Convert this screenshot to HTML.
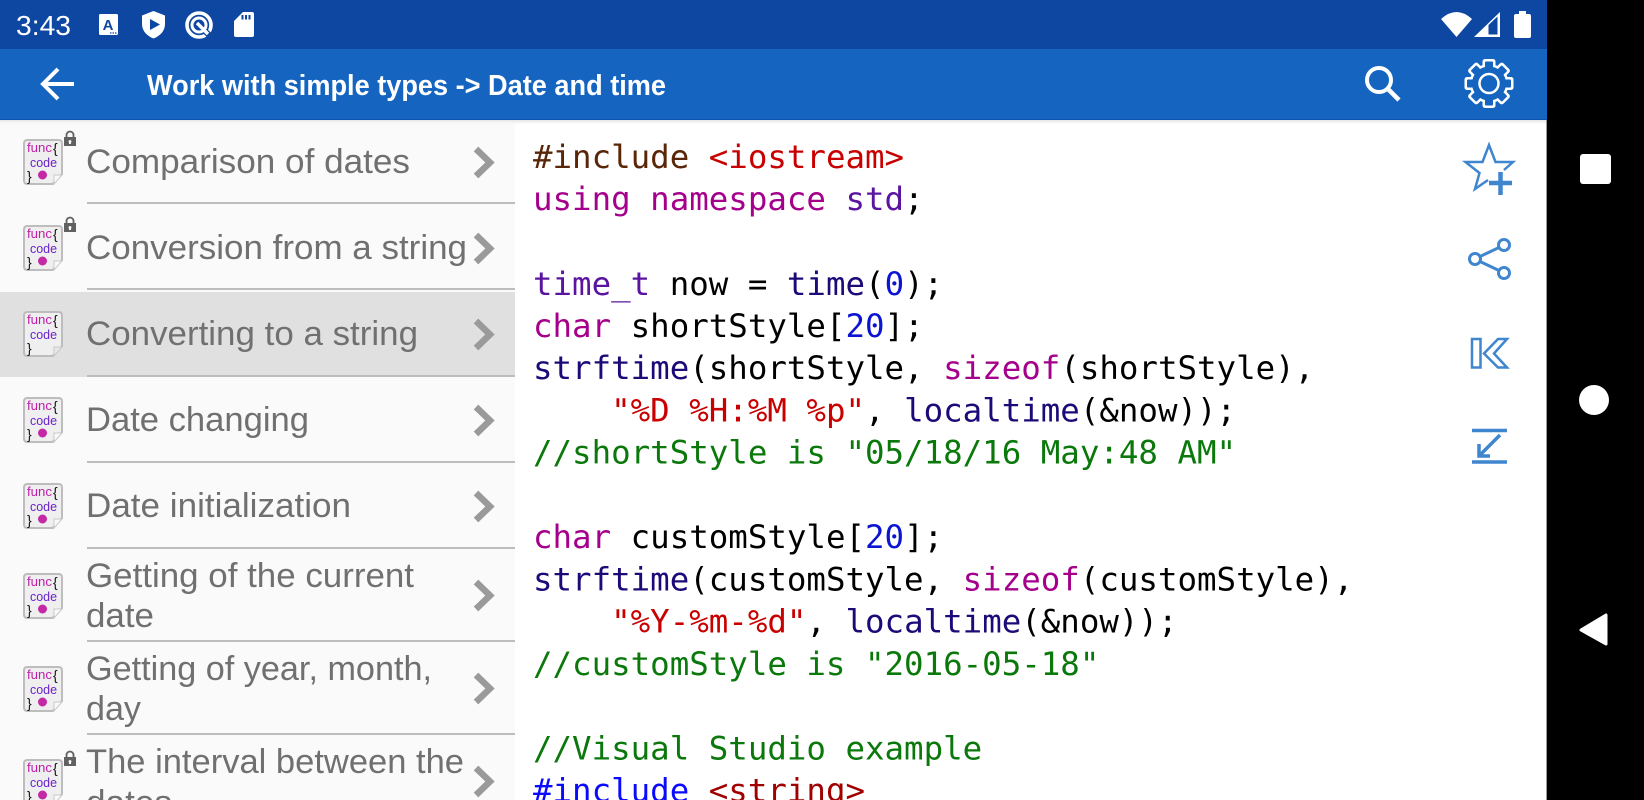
<!DOCTYPE html>
<html><head><meta charset="utf-8"><title>Date and time</title>
<style>
html,body{margin:0;padding:0;width:1644px;height:800px;overflow:hidden;background:#fff}
svg{display:block}
.r{font-family:"Liberation Sans",sans-serif;font-size:34px;fill:#707070}
.c{font-family:"DejaVu Sans Mono","Liberation Mono",monospace;font-size:32.45px;fill:#000;white-space:pre}
.f{font-family:"Liberation Sans",sans-serif;font-size:13px;fill:#c020a8}
.d{font-family:"Liberation Sans",sans-serif;font-size:13px;fill:#6a22c8}
.b{font-family:"Liberation Sans",sans-serif;font-size:14px;fill:#111}
.kw{fill:#a5008c}.ty{fill:#5a14a0}.fn{fill:#1c0a78}.st{fill:#c80000}.cm{fill:#0b780b}.nu{fill:#0a14d2}
</style></head><body>
<svg width="1644" height="800" viewBox="0 0 1644 800" xmlns="http://www.w3.org/2000/svg">
<rect width="1644" height="800" fill="#fff"/>
<!-- list bg -->
<rect x="0" y="120" width="515" height="680" fill="#fafafa"/>
<rect x="0" y="292" width="515" height="85" fill="#e0e0e0"/>
<!-- bars -->
<rect x="0" y="0" width="1547" height="49" fill="#0d47a1"/>
<rect x="0" y="49" width="1547" height="71" fill="#1565c0"/>
<rect x="0" y="119" width="1547" height="1" fill="#0d55ae"/>
<rect x="0" y="120" width="1547" height="1.5" fill="#e8e8e8"/>
<rect x="0" y="121.5" width="1547" height="2" fill="#f6f6f6"/>
<!-- nav -->
<rect x="1546" y="120" width="1" height="680" fill="#9a9a9a"/>
<rect x="1547" y="0" width="97" height="800" fill="#000"/>
<rect x="1580" y="154" width="31" height="30" rx="3" fill="#fff"/>
<circle cx="1594" cy="400" r="15" fill="#fff"/>
<path d="M1606 615 L1606 644 L1581 630 Z" fill="#fff" stroke="#fff" stroke-width="3" stroke-linejoin="round"/>

<!-- status bar -->
<text x="16" y="35" font-family="Liberation Sans,sans-serif" font-size="27.5" fill="#fff" textLength="55" lengthAdjust="spacingAndGlyphs">3:43</text>
<rect x="99" y="14" width="19" height="21" rx="1.5" fill="#fff"/>
<text x="108" y="30" text-anchor="middle" font-family="Liberation Sans,sans-serif" font-size="15" font-weight="bold" fill="#0d47a1">A</text>
<path d="M110 33h1.500M112.500 33h1.500M115 33h1.500" stroke="#0d47a1" stroke-width="1.200"/>
<path d="M153.500 11 L165 15.500 V24 C165 31 160 36 153.500 38.500 C147 36 142 31 142 24 V15.500 Z" fill="#fff"/>
<path d="M150 19 L160 24.500 L150 30 Z" fill="#0d47a1"/>
<circle cx="199" cy="25" r="12" fill="none" stroke="#fff" stroke-width="3.600"/>
<circle cx="199" cy="25" r="7" fill="none" stroke="#fff" stroke-width="3"/>
<path d="M205 31 L213 39" stroke="#0d47a1" stroke-width="6"/>
<path d="M197 23 L208 34" stroke="#fff" stroke-width="3.400"/>
<path d="M243 12 H252 Q254 12 254 14 V35 Q254 37 252 37 H236 Q234 37 234 35 V21 Z" fill="#fff"/>
<path d="M242.500 15v4.500M246 15v4.500M249.500 15v4.500" stroke="#0d47a1" stroke-width="2"/>
<path d="M1441 19 Q1456.500 5 1472 19 L1456.500 37 Z" fill="#fff"/>
<path d="M1474 37 L1500 12 V37 Z" fill="#fff"/>
<path d="M1488.500 25 L1497.500 16.500 V34.500 H1488.500 Z" fill="#0d47a1"/>
<rect x="1514" y="14" width="17" height="24" rx="2" fill="#fff"/>
<rect x="1519" y="11" width="7" height="4" fill="#fff"/>

<!-- app bar -->
<path d="M43 84 H74 M58 69 L43 84 L58 99" fill="none" stroke="#fff" stroke-width="4"/>
<text x="147" y="95" font-family="Liberation Sans,sans-serif" font-size="28.5" font-weight="bold" fill="#fff" textLength="519" lengthAdjust="spacingAndGlyphs">Work with simple types -&gt; Date and time</text>
<circle cx="1379" cy="80" r="12" fill="none" stroke="#fff" stroke-width="4"/>
<path d="M1388 89 L1399 100" stroke="#fff" stroke-width="4.500"/>
<!-- gear -->
<g transform="translate(1489 83.500)">
<circle r="19.500" fill="#fff"/>
<g fill="#fff">
<rect x="-6.500" y="-24.500" width="13" height="13" rx="2.500"/>
<rect x="-6.500" y="-24.500" width="13" height="13" rx="2.500" transform="rotate(45)"/>
<rect x="-6.500" y="-24.500" width="13" height="13" rx="2.500" transform="rotate(90)"/>
<rect x="-6.500" y="-24.500" width="13" height="13" rx="2.500" transform="rotate(135)"/>
<rect x="-6.500" y="-24.500" width="13" height="13" rx="2.500" transform="rotate(180)"/>
<rect x="-6.500" y="-24.500" width="13" height="13" rx="2.500" transform="rotate(225)"/>
<rect x="-6.500" y="-24.500" width="13" height="13" rx="2.500" transform="rotate(270)"/>
<rect x="-6.500" y="-24.500" width="13" height="13" rx="2.500" transform="rotate(315)"/>
</g>
<circle r="17" fill="#1565c0"/>
<g fill="#1565c0">
<rect x="-4" y="-22" width="8" height="12" rx="1"/>
<rect x="-4" y="-22" width="8" height="12" rx="1" transform="rotate(45)"/>
<rect x="-4" y="-22" width="8" height="12" rx="1" transform="rotate(90)"/>
<rect x="-4" y="-22" width="8" height="12" rx="1" transform="rotate(135)"/>
<rect x="-4" y="-22" width="8" height="12" rx="1" transform="rotate(180)"/>
<rect x="-4" y="-22" width="8" height="12" rx="1" transform="rotate(225)"/>
<rect x="-4" y="-22" width="8" height="12" rx="1" transform="rotate(270)"/>
<rect x="-4" y="-22" width="8" height="12" rx="1" transform="rotate(315)"/>
</g>
<circle r="9.500" fill="none" stroke="#fff" stroke-width="2.500"/>
</g>

<!-- right icons -->
<g fill="none" stroke="#3f86cf" stroke-miterlimit="12">
<path d="M1504 170 L1513 162 H1495.500 L1489 145 L1482.500 162 H1465.500 L1479.500 173 L1475 189 L1488 180" stroke-width="2.500"/>
<path d="M1489 183 H1512 M1500.500 172 V195" stroke-width="4.500"/>
<circle cx="1504" cy="245" r="5.500" stroke-width="3"/>
<circle cx="1475" cy="259" r="5.500" stroke-width="3"/>
<circle cx="1504" cy="273" r="5.500" stroke-width="3"/>
<path d="M1480 256.500 L1499 247.500 M1480 261.500 L1499 270.500" stroke-width="3"/>
<rect x="1472" y="339" width="8.500" height="28.500" stroke-width="2.500"/>
<path d="M1507 339 H1498 L1484 353.500 L1498 367.500 H1507 L1494 353.500 Z" stroke-width="2.500"/>
<path d="M1472 430.500 H1507 M1472 462 H1507" stroke-width="3.500"/>
<path d="M1500 435 L1480 455 M1479 444 V456 H1490" stroke-width="3.500"/>
</g>

<!-- dividers -->
<g fill="#bdbdbd">
<rect x="87" y="202" width="428" height="2"/>
<rect x="87" y="288" width="428" height="2"/>
<rect x="87" y="375" width="428" height="2"/>
<rect x="87" y="461" width="428" height="2"/>
<rect x="87" y="547" width="428" height="2"/>
<rect x="87" y="640" width="428" height="2"/>
<rect x="87" y="733" width="428" height="2"/>
</g>

<!-- list text -->
<text class="r" x="86" y="173" textLength="324" lengthAdjust="spacingAndGlyphs">Comparison of dates</text>
<text class="r" x="86" y="259" textLength="381" lengthAdjust="spacingAndGlyphs">Conversion from a string</text>
<text class="r" x="86" y="345" textLength="332" lengthAdjust="spacingAndGlyphs">Converting to a string</text>
<text class="r" x="86" y="431" textLength="223" lengthAdjust="spacingAndGlyphs">Date changing</text>
<text class="r" x="86" y="517" textLength="265" lengthAdjust="spacingAndGlyphs">Date initialization</text>
<text class="r" x="86" y="587" textLength="328" lengthAdjust="spacingAndGlyphs">Getting of the current</text>
<text class="r" x="86" y="627" textLength="68" lengthAdjust="spacingAndGlyphs">date</text>
<text class="r" x="86" y="680" textLength="346" lengthAdjust="spacingAndGlyphs">Getting of year, month,</text>
<text class="r" x="86" y="720" textLength="55" lengthAdjust="spacingAndGlyphs">day</text>
<text class="r" x="86" y="773" textLength="378" lengthAdjust="spacingAndGlyphs">The interval between the</text>
<text class="r" x="86" y="814" textLength="86" lengthAdjust="spacingAndGlyphs">dates</text>

<!-- chevrons -->
<g fill="none" stroke="#9a9a9a" stroke-width="6.500">
<path d="M476 149 L490 162.500 L476 176"/>
<path d="M476 235 L490 248.500 L476 262"/>
<path d="M476 321 L490 334.500 L476 348"/>
<path d="M476 407 L490 420.500 L476 434"/>
<path d="M476 493 L490 506.500 L476 520"/>
<path d="M476 582 L490 595.500 L476 609"/>
<path d="M476 675 L490 688.500 L476 702"/>
<path d="M476 768 L490 781.500 L476 795"/>
</g>

<!-- list icons -->
<g transform="translate(0 0)"><path d="M27.500 140 H58.500 Q62 140 62 143.500 V174 L52.500 184 H27.500 Q24 184 24 180.500 V143.500 Q24 140 27.500 140 Z" fill="#efefef" stroke="#bdbdbd" stroke-width="2"/><path d="M54 184 V175 H62 Z" fill="#fafafa" stroke="#c8c8c8"/><text class="f" x="27" y="152" textLength="25" lengthAdjust="spacingAndGlyphs">func</text><text class="b" x="53" y="153">{</text><text class="d" x="30" y="167" textLength="27" lengthAdjust="spacingAndGlyphs">code</text><text class="b" x="27" y="181">}</text><circle cx="42.500" cy="175" r="4.500" fill="#c428a4"/></g>
<g transform="translate(0 86)"><path d="M27.500 140 H58.500 Q62 140 62 143.500 V174 L52.500 184 H27.500 Q24 184 24 180.500 V143.500 Q24 140 27.500 140 Z" fill="#efefef" stroke="#bdbdbd" stroke-width="2"/><path d="M54 184 V175 H62 Z" fill="#fafafa" stroke="#c8c8c8"/><text class="f" x="27" y="152" textLength="25" lengthAdjust="spacingAndGlyphs">func</text><text class="b" x="53" y="153">{</text><text class="d" x="30" y="167" textLength="27" lengthAdjust="spacingAndGlyphs">code</text><text class="b" x="27" y="181">}</text><circle cx="42.500" cy="175" r="4.500" fill="#c428a4"/></g>
<g transform="translate(0 172)"><path d="M27.500 140 H58.500 Q62 140 62 143.500 V174 L52.500 184 H27.500 Q24 184 24 180.500 V143.500 Q24 140 27.500 140 Z" fill="#efefef" stroke="#bdbdbd" stroke-width="2"/><path d="M54 184 V175 H62 Z" fill="#e8e8e8" stroke="#c8c8c8"/><text class="f" x="27" y="152" textLength="25" lengthAdjust="spacingAndGlyphs">func</text><text class="b" x="53" y="153">{</text><text class="d" x="30" y="167" textLength="27" lengthAdjust="spacingAndGlyphs">code</text><text class="b" x="27" y="181">}</text></g>
<g transform="translate(0 258)"><path d="M27.500 140 H58.500 Q62 140 62 143.500 V174 L52.500 184 H27.500 Q24 184 24 180.500 V143.500 Q24 140 27.500 140 Z" fill="#efefef" stroke="#bdbdbd" stroke-width="2"/><path d="M54 184 V175 H62 Z" fill="#fafafa" stroke="#c8c8c8"/><text class="f" x="27" y="152" textLength="25" lengthAdjust="spacingAndGlyphs">func</text><text class="b" x="53" y="153">{</text><text class="d" x="30" y="167" textLength="27" lengthAdjust="spacingAndGlyphs">code</text><text class="b" x="27" y="181">}</text><circle cx="42.500" cy="175" r="4.500" fill="#c428a4"/></g>
<g transform="translate(0 344)"><path d="M27.500 140 H58.500 Q62 140 62 143.500 V174 L52.500 184 H27.500 Q24 184 24 180.500 V143.500 Q24 140 27.500 140 Z" fill="#efefef" stroke="#bdbdbd" stroke-width="2"/><path d="M54 184 V175 H62 Z" fill="#fafafa" stroke="#c8c8c8"/><text class="f" x="27" y="152" textLength="25" lengthAdjust="spacingAndGlyphs">func</text><text class="b" x="53" y="153">{</text><text class="d" x="30" y="167" textLength="27" lengthAdjust="spacingAndGlyphs">code</text><text class="b" x="27" y="181">}</text><circle cx="42.500" cy="175" r="4.500" fill="#c428a4"/></g>
<g transform="translate(0 434)"><path d="M27.500 140 H58.500 Q62 140 62 143.500 V174 L52.500 184 H27.500 Q24 184 24 180.500 V143.500 Q24 140 27.500 140 Z" fill="#efefef" stroke="#bdbdbd" stroke-width="2"/><path d="M54 184 V175 H62 Z" fill="#fafafa" stroke="#c8c8c8"/><text class="f" x="27" y="152" textLength="25" lengthAdjust="spacingAndGlyphs">func</text><text class="b" x="53" y="153">{</text><text class="d" x="30" y="167" textLength="27" lengthAdjust="spacingAndGlyphs">code</text><text class="b" x="27" y="181">}</text><circle cx="42.500" cy="175" r="4.500" fill="#c428a4"/></g>
<g transform="translate(0 527)"><path d="M27.500 140 H58.500 Q62 140 62 143.500 V174 L52.500 184 H27.500 Q24 184 24 180.500 V143.500 Q24 140 27.500 140 Z" fill="#efefef" stroke="#bdbdbd" stroke-width="2"/><path d="M54 184 V175 H62 Z" fill="#fafafa" stroke="#c8c8c8"/><text class="f" x="27" y="152" textLength="25" lengthAdjust="spacingAndGlyphs">func</text><text class="b" x="53" y="153">{</text><text class="d" x="30" y="167" textLength="27" lengthAdjust="spacingAndGlyphs">code</text><text class="b" x="27" y="181">}</text><circle cx="42.500" cy="175" r="4.500" fill="#c428a4"/></g>
<g transform="translate(0 620)"><path d="M27.500 140 H58.500 Q62 140 62 143.500 V174 L52.500 184 H27.500 Q24 184 24 180.500 V143.500 Q24 140 27.500 140 Z" fill="#efefef" stroke="#bdbdbd" stroke-width="2"/><path d="M54 184 V175 H62 Z" fill="#fafafa" stroke="#c8c8c8"/><text class="f" x="27" y="152" textLength="25" lengthAdjust="spacingAndGlyphs">func</text><text class="b" x="53" y="153">{</text><text class="d" x="30" y="167" textLength="27" lengthAdjust="spacingAndGlyphs">code</text><text class="b" x="27" y="181">}</text><circle cx="42.500" cy="175" r="4.500" fill="#c428a4"/></g>

<!-- locks -->
<g fill="#616161">
<path d="M64 137 H76 V146 H64 Z M70 140 a1.500 1.500 0 0 0 -1 2.600 V144 H71 V142.600 A1.500 1.500 0 0 0 70 140 Z" fill-rule="evenodd"/>
<path d="M66.500 137.500 V135 A3.500 3.500 0 0 1 73.500 135 V137.500" fill="none" stroke="#616161" stroke-width="1.800"/>
</g>
<g fill="#616161" transform="translate(0 86)">
<path d="M64 137 H76 V146 H64 Z M70 140 a1.500 1.500 0 0 0 -1 2.600 V144 H71 V142.600 A1.500 1.500 0 0 0 70 140 Z" fill-rule="evenodd"/>
<path d="M66.500 137.500 V135 A3.500 3.500 0 0 1 73.500 135 V137.500" fill="none" stroke="#616161" stroke-width="1.800"/>
</g>
<g fill="#616161" transform="translate(0 620)">
<path d="M64 137 H76 V146 H64 Z M70 140 a1.500 1.500 0 0 0 -1 2.600 V144 H71 V142.600 A1.500 1.500 0 0 0 70 140 Z" fill-rule="evenodd"/>
<path d="M66.500 137.500 V135 A3.500 3.500 0 0 1 73.500 135 V137.500" fill="none" stroke="#616161" stroke-width="1.800"/>
</g>

<!-- code -->
<g class="c" xml:space="preserve">
<text class="c" x="533" y="168" xml:space="preserve"><tspan fill="#5a2608">#include</tspan> <tspan class="st">&lt;iostream&gt;</tspan></text>
<text class="c" x="533" y="210" xml:space="preserve"><tspan class="kw">using namespace</tspan> <tspan class="ty">std</tspan>;</text>
<text class="c" x="533" y="295" xml:space="preserve"><tspan class="ty">time_t</tspan> now = <tspan class="fn">time</tspan>(<tspan class="nu">0</tspan>);</text>
<text class="c" x="533" y="337" xml:space="preserve"><tspan class="kw">char</tspan> shortStyle[<tspan class="nu">20</tspan>];</text>
<text class="c" x="533" y="379" xml:space="preserve"><tspan class="fn">strftime</tspan>(shortStyle, <tspan class="kw">sizeof</tspan>(shortStyle),</text>
<text class="c" x="533" y="421.500" xml:space="preserve">    <tspan class="st">"%D %H:%M %p"</tspan>, <tspan class="fn">localtime</tspan>(&amp;now));</text>
<text class="c" x="533" y="463.500" xml:space="preserve"><tspan class="cm">//shortStyle is "05/18/16 May:48 AM"</tspan></text>
<text class="c" x="533" y="548" xml:space="preserve"><tspan class="kw">char</tspan> customStyle[<tspan class="nu">20</tspan>];</text>
<text class="c" x="533" y="590.500" xml:space="preserve"><tspan class="fn">strftime</tspan>(customStyle, <tspan class="kw">sizeof</tspan>(customStyle),</text>
<text class="c" x="533" y="632.500" xml:space="preserve">    <tspan class="st">"%Y-%m-%d"</tspan>, <tspan class="fn">localtime</tspan>(&amp;now));</text>
<text class="c" x="533" y="675" xml:space="preserve"><tspan class="cm">//customStyle is "2016-05-18"</tspan></text>
<text class="c" x="533" y="759.500" xml:space="preserve"><tspan class="cm">//Visual Studio example</tspan></text>
<text class="c" x="533" y="801.500" xml:space="preserve"><tspan fill="#0a0aff">#include</tspan> <tspan fill="#a00000">&lt;string&gt;</tspan></text>
</g>
</svg>
</body></html>
